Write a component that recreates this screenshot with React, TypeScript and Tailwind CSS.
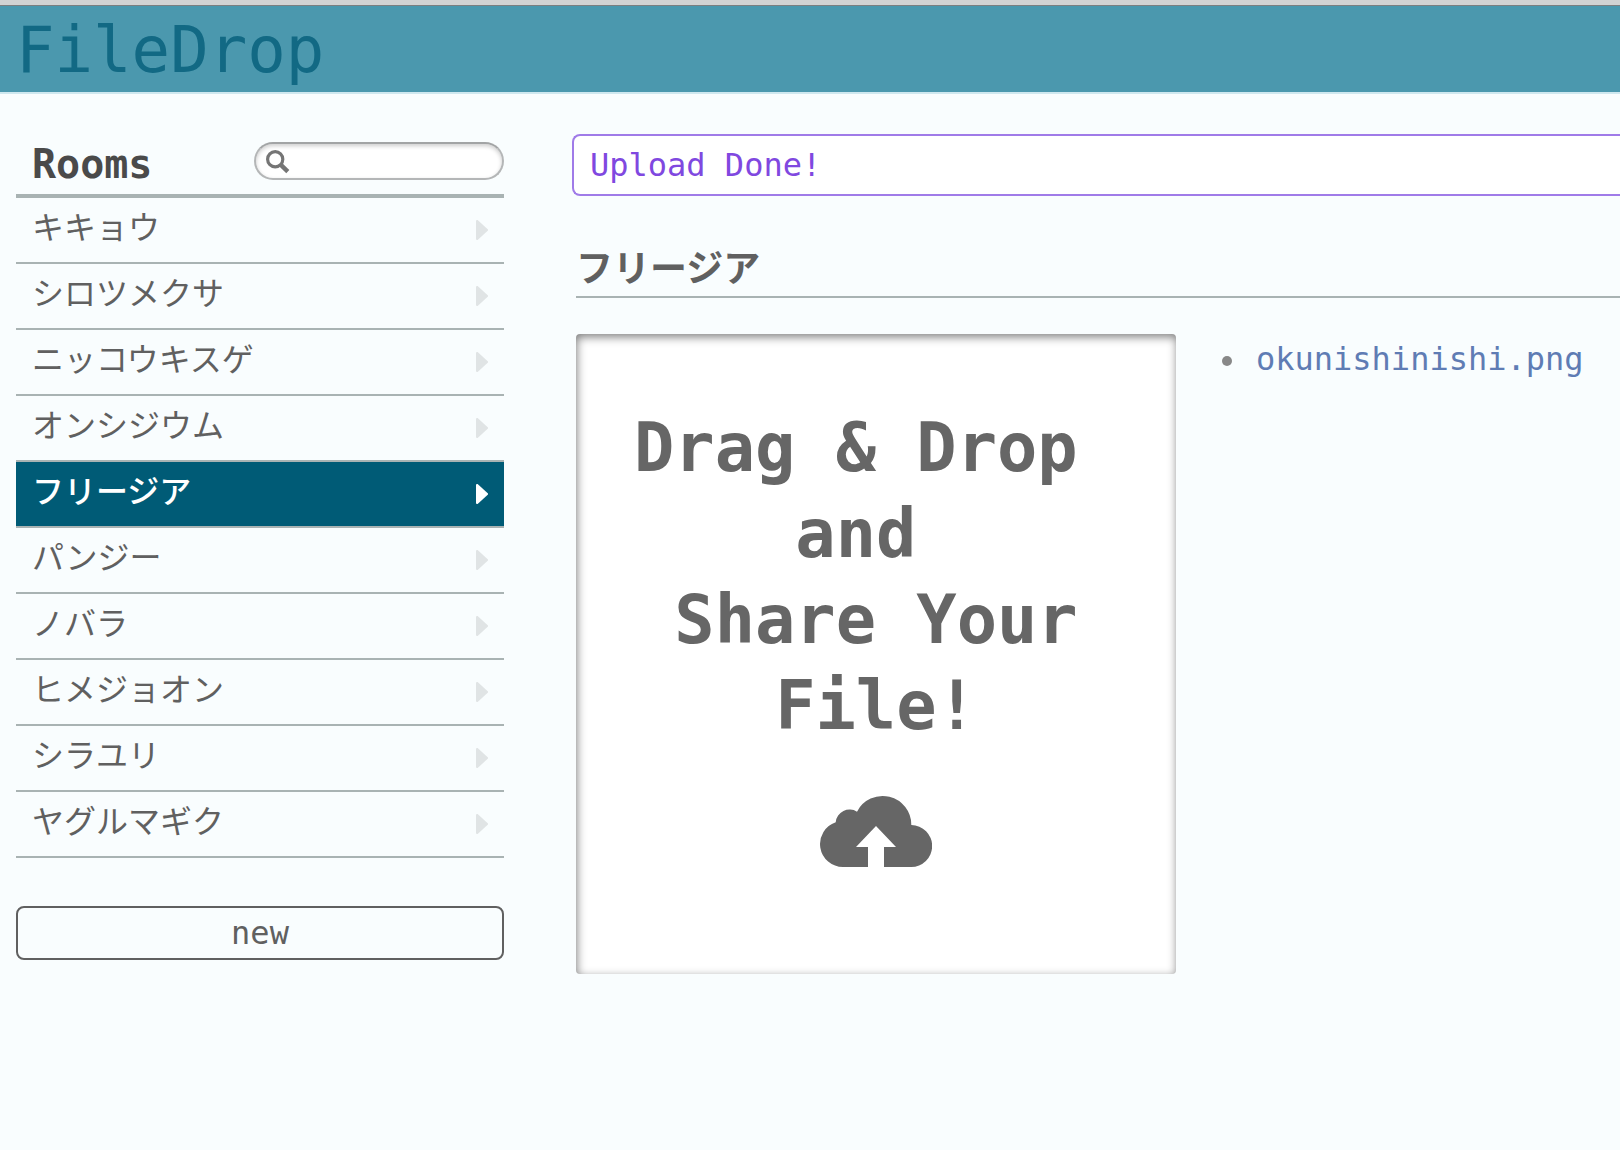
import React from "react";

const rooms = [
  "キキョウ",
  "シロツメクサ",
  "ニッコウキスゲ",
  "オンシジウム",
  "フリージア",
  "パンジー",
  "ノバラ",
  "ヒメジョオン",
  "シラユリ",
  "ヤグルマギク",
];

const activeRoom = "フリージア";

function SearchIcon() {
  return (
    <svg
      aria-hidden="true"
      viewBox="0 0 24 24"
      className="pointer-events-none absolute left-3 top-2 h-6 w-6 text-[#757575]"
      fill="none"
      stroke="currentColor"
    >
      <circle cx="9.2" cy="9.2" r="7.6" strokeWidth="3.2" />
      <path d="M14.6 14.6L21.8 21.6" strokeWidth="4.4" />
    </svg>
  );
}

function Arrow({ active }: { active: boolean }) {
  return (
    <svg
      aria-hidden="true"
      viewBox="0 0 12 20"
      className={active ? "h-5 w-3 text-white" : "h-5 w-3 text-[#e0e4e5]"}
    >
      <path
        d="M0 1Q0 0 1 0H1.6L12 9.4V10.6L1.6 20H1Q0 20 0 19Z"
        fill="currentColor"
      />
    </svg>
  );
}

function CloudUpload() {
  return (
    <svg aria-hidden="true" viewBox="0 0 112 72" className="h-[72px] w-28">
      <path
        d="M23 72A23 23 0 0 1 15.7 27.2A14 14 0 0 1 37 16.7A28.7 28.7 0 0 1 91.3 30A21 21 0 0 1 91 72H64V52H76L56 31L36 52H48V72Z"
        fill="currentColor"
      />
    </svg>
  );
}

function Sidebar() {
  return (
    <aside className="w-[488px] shrink-0 pt-12">
      <div className="flex h-14 items-start justify-between border-b-4 border-[#a9b3b3] pl-4">
        <h2 className="text-[40px] leading-[44px] font-bold text-[#4a4a4a]">Rooms</h2>
        <div className="relative w-[250px]">
          <input
            type="text"
            aria-label="Search rooms"
            className="block h-[38px] w-full rounded-full border-2 border-[#b4b6b7] border-t-[#a2a4a5] bg-white pr-4 pl-11 text-xl shadow-[inset_0_2px_4px_rgba(0,0,0,0.2)] outline-none"
          />
          <SearchIcon />
        </div>
      </div>
      <ul>
        {rooms.map((room) => {
          const active = room === activeRoom;
          return (
            <li key={room} className="border-b-2 border-[#a9b3b3]">
              <a
                href="#"
                aria-current={active ? "page" : undefined}
                className={
                  active
                    ? "flex h-16 items-center justify-between bg-[#005b76] pr-4 pl-4 text-[32px] font-medium text-white"
                    : "flex h-16 items-center justify-between pr-4 pl-4 text-[32px] text-[#606060]"
                }
              >
                <span className="pb-1 leading-[48px]">{room}</span>
                <Arrow active={active} />
              </a>
            </li>
          );
        })}
      </ul>
      <button
        type="button"
        className="mt-12 block h-[54px] w-full rounded-lg border-2 border-[#606060] text-[32px] leading-[48px] text-[#606060]"
      >
        new
      </button>
    </aside>
  );
}

export default function App() {
  return (
    <div className="min-h-screen overflow-hidden bg-[#f9fdfe] font-['DejaVu_Sans_Mono','Noto_Sans_CJK_JP',monospace]">
      <div className="h-1.5 border-b border-[#7d7f80] bg-[#d3d3d3]" />
      <header className="border-b-2 border-[#cfe8ef] bg-[#4b98ae] pl-4">
        <h1 className="pt-0.5 text-[64px] leading-[84px] text-[#126984]">FileDrop</h1>
      </header>
      <div className="flex items-start pl-4">
        <Sidebar />
        <main className="ml-[68px] min-w-0 grow pt-10">
          <p
            role="status"
            className="rounded-l-lg border-2 border-r-0 border-[#a07be8] bg-white pl-4 text-[32px] leading-[58px] text-[#8048e0]"
          >
            Upload Done!
          </p>
          <div className="pl-1">
            <h2 className="mt-12 border-b-2 border-[#a9b3b3] text-[37px] leading-[52px] font-bold text-[#606060]">
              {activeRoom}
            </h2>
            <div className="mt-9 flex items-start">
              <section
                aria-label="Drop area"
                className="flex h-[640px] w-[600px] shrink-0 flex-col items-center rounded bg-white pt-[71px] text-[#666666] shadow-[inset_1px_3px_10px_rgba(0,0,0,0.5)]"
              >
                <h2 className="text-center text-[67px] leading-[86px] font-bold whitespace-pre">
                  {"Drag & Drop\u00a0\nand\u00a0\nShare Your\nFile!"}
                </h2>
                <div className="mt-[46px]">
                  <CloudUpload />
                </div>
              </section>
              <ul className="pl-[46px]">
                <li className="flex items-center gap-6 text-[32px] leading-[50px]">
                  <span aria-hidden="true" className="mt-1 h-2.5 w-2.5 rounded-full bg-[#888888]" />
                  <a href="#" className="text-[#5f7cb4]">
                    okunishinishi.png
                  </a>
                </li>
              </ul>
            </div>
          </div>
        </main>
      </div>
    </div>
  );
}
